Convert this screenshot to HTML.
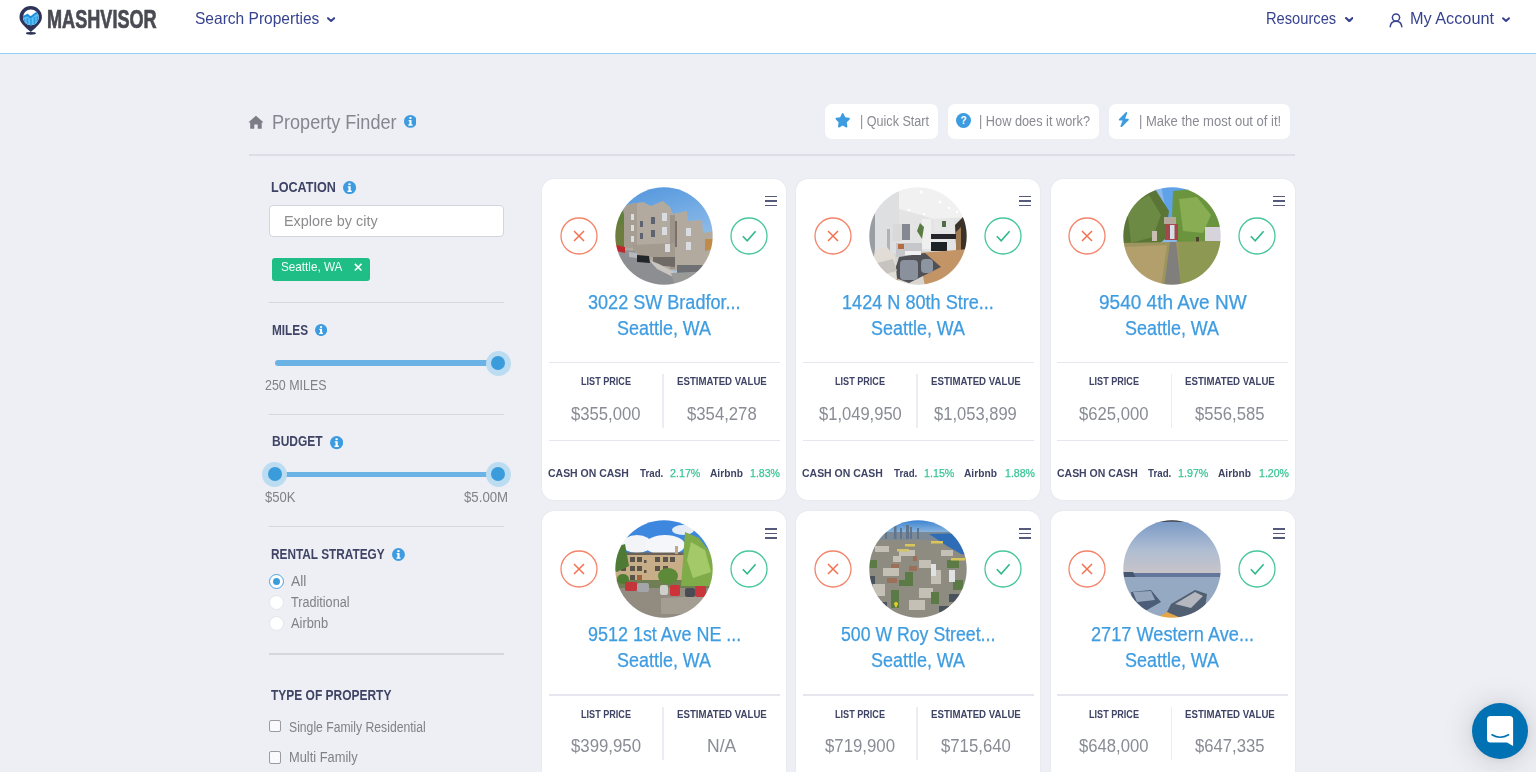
<!DOCTYPE html>
<html><head><meta charset="utf-8"><title>Mashvisor Property Finder</title>
<style>
html,body{margin:0;padding:0;}
body{width:1536px;height:772px;overflow:hidden;position:relative;background:#eeeff4;font-family:"Liberation Sans",sans-serif;}
.t{position:absolute;white-space:nowrap;transform-origin:0 0;}
</style></head><body>
<div style="position:absolute;left:0;top:0;width:1536px;height:53px;background:#fff;border-bottom:1px solid #8fd0f5"></div>
<svg style="position:absolute;left:0;top:0" width="60" height="40" viewBox="0 0 60 40">
<path d="M30.7 6 A11.2 11.2 0 0 1 41.9 17.2 C41.9 22.5 37 26.5 30.8 32 C24.5 26.5 19.5 22.5 19.5 17.2 A11.2 11.2 0 0 1 30.7 6 Z" fill="#2f3358"/>
<ellipse cx="30.9" cy="33.3" rx="5.1" ry="1.4" fill="#2f3358"/>
<circle cx="30.9" cy="17.3" r="7.9" fill="#fff"/>
<clipPath id="lc"><circle cx="30.9" cy="17.3" r="7.9"/></clipPath>
<g clip-path="url(#lc)">
<path d="M22 17.5 L27.4 14.8 L30.5 17.6 L35.6 13.4 L40 12 L40 27 L22 27 Z" fill="#5fbdf0"/>
<path d="M24.5 19 v8 M27.5 18 v9 M31 19 v8 M34.5 17 v10 M37.5 16 v11" stroke="#2a9fe6" stroke-width="1.6"/>
<path d="M22 17.5 L27.4 14.8 L30.5 17.6 L35.6 13.4 L40 12" stroke="#1b8fdc" stroke-width="2" fill="none" stroke-linejoin="round"/>
</g>
</svg>
<div class="t" style="left:47.40px;top:6.42px;font-size:26.20px;line-height:26.20px;color:#4a4a53;font-weight:700;transform:scaleX(0.6914);-webkit-text-stroke:0.7px #4a4a53;">MASHVISOR</div>
<div class="t" style="left:195.25px;top:9.73px;font-size:16.50px;line-height:16.50px;color:#37438f;transform:scaleX(0.9416);">Search Properties</div>
<svg style="position:absolute;left:327.2px;top:17.0px" width="8.2" height="5.4" viewBox="0 0 8 5"><path d="M1 1 L4 3.8 L7 1" stroke="#37438f" stroke-width="2" fill="none" stroke-linecap="round" stroke-linejoin="round"/></svg>
<div class="t" style="left:1265.80px;top:9.73px;font-size:16.50px;line-height:16.50px;color:#37438f;transform:scaleX(0.8901);">Resources</div>
<svg style="position:absolute;left:1344.5px;top:17.0px" width="8.6" height="5.4" viewBox="0 0 8 5"><path d="M1 1 L4 3.8 L7 1" stroke="#37438f" stroke-width="2" fill="none" stroke-linecap="round" stroke-linejoin="round"/></svg>
<svg style="position:absolute;left:1388px;top:12px" width="16" height="16" viewBox="0 0 16 16"><circle cx="8" cy="5.5" r="3.6" stroke="#37438f" stroke-width="1.5" fill="none"/><path d="M2.2 14.8 C2.6 10.8 5 9.2 8 9.2 C11 9.2 13.4 10.8 13.8 14.8" stroke="#37438f" stroke-width="1.5" fill="none" stroke-linecap="round"/></svg>
<div class="t" style="left:1409.60px;top:9.73px;font-size:16.50px;line-height:16.50px;color:#37438f;transform:scaleX(0.9849);">My Account</div>
<svg style="position:absolute;left:1501.5px;top:17.0px" width="8.0" height="5.4" viewBox="0 0 8 5"><path d="M1 1 L4 3.8 L7 1" stroke="#37438f" stroke-width="2" fill="none" stroke-linecap="round" stroke-linejoin="round"/></svg>
<svg style="position:absolute;left:248px;top:115px" width="16" height="15" viewBox="0 0 16 15"><path d="M7.95 0.75 L15.1 7.1 Q15.4 7.6 14.8 7.6 L13.7 7.6 L13.7 13.3 Q13.7 13.8 13.2 13.8 L9.7 13.8 L9.7 9.6 L6.3 9.6 L6.3 13.8 L2.7 13.8 Q2.2 13.8 2.2 13.3 L2.2 7.6 L1.1 7.6 Q0.5 7.6 0.8 7.1 Z" fill="#7a7c87"/></svg>
<div class="t" style="left:271.50px;top:113.19px;font-size:19.50px;line-height:19.50px;color:#858690;transform:scaleX(0.9264);">Property Finder</div>
<svg style="position:absolute;left:403.5px;top:115.0px" width="12.8" height="12.8" viewBox="0 0 14 14"><circle cx="7" cy="7" r="7" fill="#3d9be0"/><ellipse cx="7" cy="3.4" rx="1.4" ry="1.1" fill="#fff"/><path d="M5.1 5.5 H8.2 V10.2 H9.3 V11.7 H4.8 V10.2 H5.9 V6.9 H5.1 Z" fill="#fff"/></svg>
<div style="position:absolute;left:825.0px;top:104.4px;width:113.3px;height:34.7px;background:#fff;border-radius:7px"></div>
<div style="position:absolute;left:947.8px;top:104.4px;width:151.7px;height:34.7px;background:#fff;border-radius:7px"></div>
<div style="position:absolute;left:1108.8px;top:104.4px;width:180.8px;height:34.7px;background:#fff;border-radius:7px"></div>
<svg style="position:absolute;left:835.3px;top:113px" width="15.4" height="14.5" viewBox="0 0 576 512" preserveAspectRatio="none"><path d="M259.3 17.8L194 150.2 47.9 171.5c-26.2 3.8-36.7 36.1-17.7 54.6l105.7 103-25 145.5c-4.5 26.3 23.2 46 46.4 33.7L288 439.6l130.7 68.7c23.2 12.2 50.9-7.4 46.4-33.7l-25-145.5 105.7-103c19-18.5 8.5-50.8-17.7-54.6L382 150.2 316.7 17.8c-11.7-23.6-45.6-23.9-57.4 0z" fill="#3d9be0"/></svg>
<div class="t" style="left:859.50px;top:115.02px;font-size:13.80px;line-height:13.80px;color:#8a8b93;transform:scaleX(0.9119);">| Quick Start</div>
<svg style="position:absolute;left:956.3px;top:112.5px" width="15" height="15" viewBox="0 0 15 15"><circle cx="7.5" cy="7.5" r="7.5" fill="#3d9be0"/><text x="7.5" y="11.2" text-anchor="middle" font-family="Liberation Sans" font-weight="700" font-size="10" fill="#fff">?</text></svg>
<div class="t" style="left:979.00px;top:115.02px;font-size:13.80px;line-height:13.80px;color:#8a8b93;transform:scaleX(0.9237);">| How does it work?</div>
<svg style="position:absolute;left:1118.3px;top:112.2px" width="11.7" height="15.2" viewBox="0 0 448 512" preserveAspectRatio="none"><path d="M349.4 44.6c5.9-13.7 1.5-29.7-10.6-38.5s-28.6-8-39.9 1.8l-256 224c-10 8.8-13.6 22.9-8.9 35.3S50.7 288 64 288H175.5L98.6 467.4c-5.9 13.7-1.5 29.7 10.6 38.5s28.6 8 39.9-1.8l256-224c10-8.8 13.6-22.9 8.9-35.3s-16.6-20.7-30-20.7H272.5L349.4 44.6z" fill="#3d9be0"/></svg>
<div class="t" style="left:1138.60px;top:115.02px;font-size:13.80px;line-height:13.80px;color:#8a8b93;transform:scaleX(0.9427);">| Make the most out of it!</div>
<div style="position:absolute;left:248.7px;top:154.3px;width:1046.3px;height:2px;background:#dcdde7"></div>
<div class="t" style="left:271.20px;top:181.22px;font-size:13.80px;line-height:13.80px;color:#3f4465;font-weight:700;transform:scaleX(0.9137);">LOCATION</div>
<svg style="position:absolute;left:343.0px;top:181.2px" width="13.1" height="13.1" viewBox="0 0 14 14"><circle cx="7" cy="7" r="7" fill="#3d9be0"/><ellipse cx="7" cy="3.4" rx="1.4" ry="1.1" fill="#fff"/><path d="M5.1 5.5 H8.2 V10.2 H9.3 V11.7 H4.8 V10.2 H5.9 V6.9 H5.1 Z" fill="#fff"/></svg>
<div style="position:absolute;left:269.2px;top:204.5px;width:234.8px;height:32.4px;box-sizing:border-box;background:#fff;border:1px solid #d3d4dd;border-radius:4px"></div>
<div class="t" style="left:284.30px;top:213.79px;font-size:14.30px;line-height:14.30px;color:#8c8c8f;transform:scaleX(1.0078);">Explore by city</div>
<div style="position:absolute;left:271.5px;top:257.9px;width:98px;height:22.8px;background:#1ebe86;border-radius:3px"></div>
<div class="t" style="left:280.90px;top:261.37px;font-size:12.20px;line-height:12.20px;color:#f2fff9;transform:scaleX(0.9599);">Seattle, WA</div>
<svg style="position:absolute;left:353.7px;top:262.6px" width="8.3" height="8.3" viewBox="0 0 8 8"><path d="M0.8 0.8 L7.2 7.2 M7.2 0.8 L0.8 7.2" stroke="#fff" stroke-width="1.5"/></svg>
<div style="position:absolute;left:269px;top:301.8px;width:235px;height:1.5px;background:#d5d6dc"></div>
<div class="t" style="left:271.50px;top:324.02px;font-size:13.80px;line-height:13.80px;color:#3f4465;font-weight:700;transform:scaleX(0.8560);">MILES</div>
<svg style="position:absolute;left:315.0px;top:324.4px" width="12.1" height="12.1" viewBox="0 0 14 14"><circle cx="7" cy="7" r="7" fill="#3d9be0"/><ellipse cx="7" cy="3.4" rx="1.4" ry="1.1" fill="#fff"/><path d="M5.1 5.5 H8.2 V10.2 H9.3 V11.7 H4.8 V10.2 H5.9 V6.9 H5.1 Z" fill="#fff"/></svg>
<div style="position:absolute;left:274.6px;top:360.2px;width:223.4px;height:5.5px;background:#6ab3e4;border-radius:3px"></div>
<div style="position:absolute;left:485.5px;top:350.5px;width:25px;height:25px;border-radius:50%;background:#bcdcf1"></div>
<div style="position:absolute;left:490.8px;top:355.8px;width:14.4px;height:14.4px;border-radius:50%;background:#3b9cdc"></div>
<div class="t" style="left:265.00px;top:379.02px;font-size:13.80px;line-height:13.80px;color:#808189;transform:scaleX(0.9009);">250 MILES</div>
<div style="position:absolute;left:269px;top:413.9px;width:235px;height:1.5px;background:#d5d6dc"></div>
<div class="t" style="left:271.50px;top:435.42px;font-size:13.80px;line-height:13.80px;color:#3f4465;font-weight:700;transform:scaleX(0.8702);">BUDGET</div>
<svg style="position:absolute;left:329.6px;top:436.4px" width="13.2" height="13.2" viewBox="0 0 14 14"><circle cx="7" cy="7" r="7" fill="#3d9be0"/><ellipse cx="7" cy="3.4" rx="1.4" ry="1.1" fill="#fff"/><path d="M5.1 5.5 H8.2 V10.2 H9.3 V11.7 H4.8 V10.2 H5.9 V6.9 H5.1 Z" fill="#fff"/></svg>
<div style="position:absolute;left:274.6px;top:471.6px;width:223.4px;height:5.5px;background:#6ab3e4;border-radius:3px"></div>
<div style="position:absolute;left:262.4px;top:461.8px;width:25px;height:25px;border-radius:50%;background:#bcdcf1"></div>
<div style="position:absolute;left:267.7px;top:467.1px;width:14.4px;height:14.4px;border-radius:50%;background:#3b9cdc"></div>
<div style="position:absolute;left:485.5px;top:461.8px;width:25px;height:25px;border-radius:50%;background:#bcdcf1"></div>
<div style="position:absolute;left:490.8px;top:467.1px;width:14.4px;height:14.4px;border-radius:50%;background:#3b9cdc"></div>
<div class="t" style="left:265.00px;top:491.32px;font-size:13.80px;line-height:13.80px;color:#808189;transform:scaleX(0.9465);">$50K</div>
<div class="t" style="left:464.00px;top:491.32px;font-size:13.80px;line-height:13.80px;color:#808189;transform:scaleX(0.9582);">$5.00M</div>
<div style="position:absolute;left:269px;top:525.5px;width:235px;height:1.5px;background:#d5d6dc"></div>
<div class="t" style="left:271.40px;top:548.02px;font-size:13.80px;line-height:13.80px;color:#3f4465;font-weight:700;transform:scaleX(0.8573);">RENTAL STRATEGY</div>
<svg style="position:absolute;left:392.4px;top:548.0px" width="12.9" height="12.9" viewBox="0 0 14 14"><circle cx="7" cy="7" r="7" fill="#3d9be0"/><ellipse cx="7" cy="3.4" rx="1.4" ry="1.1" fill="#fff"/><path d="M5.1 5.5 H8.2 V10.2 H9.3 V11.7 H4.8 V10.2 H5.9 V6.9 H5.1 Z" fill="#fff"/></svg>
<div style="position:absolute;left:269.2px;top:573.6px;width:15px;height:15px;box-sizing:border-box;border-radius:50%;background:#fff;border:1.5px solid #4aa3e2"></div>
<div style="position:absolute;left:273.2px;top:577.6px;width:7px;height:7px;border-radius:50%;background:#3b9cdc"></div>
<div style="position:absolute;left:269.2px;top:595.0px;width:15px;height:15px;box-sizing:border-box;border-radius:50%;background:#fff;border:1px solid #e4e5ea"></div>
<div style="position:absolute;left:269.2px;top:615.9px;width:15px;height:15px;box-sizing:border-box;border-radius:50%;background:#fff;border:1px solid #e4e5ea"></div>
<div class="t" style="left:291.40px;top:574.62px;font-size:13.80px;line-height:13.80px;color:#808189;transform:scaleX(1.0005);">All</div>
<div class="t" style="left:291.40px;top:596.02px;font-size:13.80px;line-height:13.80px;color:#808189;transform:scaleX(0.9152);">Traditional</div>
<div class="t" style="left:291.40px;top:617.22px;font-size:13.80px;line-height:13.80px;color:#808189;transform:scaleX(0.9299);">Airbnb</div>
<div style="position:absolute;left:269px;top:653.0px;width:235px;height:1.5px;background:#d5d6dc"></div>
<div class="t" style="left:271.20px;top:688.92px;font-size:13.80px;line-height:13.80px;color:#3f4465;font-weight:700;transform:scaleX(0.8675);">TYPE OF PROPERTY</div>
<div style="position:absolute;left:269px;top:719.8px;width:12.2px;height:12.2px;box-sizing:border-box;border:1.3px solid #9a9ba3;border-radius:2px;background:#fafafc"></div>
<div style="position:absolute;left:269px;top:751.4px;width:12.2px;height:12.2px;box-sizing:border-box;border:1.3px solid #9a9ba3;border-radius:2px;background:#fafafc"></div>
<div class="t" style="left:288.60px;top:720.82px;font-size:13.80px;line-height:13.80px;color:#808189;transform:scaleX(0.8830);">Single Family Residential</div>
<div class="t" style="left:288.60px;top:751.22px;font-size:13.80px;line-height:13.80px;color:#808189;transform:scaleX(0.9319);">Multi Family</div>
<div style="position:absolute;left:542.3px;top:178.5px;width:244px;height:321.8px;background:#fff;border-radius:12px;box-shadow:0 0 1.5px rgba(40,40,80,0.10)"></div>
<svg style="position:absolute;left:560.2px;top:217.2px" width="38" height="38" viewBox="0 0 38 38"><circle cx="19" cy="19" r="18" stroke="#f4846a" stroke-width="1.3" fill="none"/><path d="M14 14 L24 24 M24 14 L14 24" stroke="#f2714f" stroke-width="1.5"/></svg>
<svg style="position:absolute;left:729.7px;top:217.2px" width="38" height="38" viewBox="0 0 38 38"><circle cx="19" cy="19" r="18" stroke="#47c79a" stroke-width="1.3" fill="none"/><path d="M12.8 19.2 L17.2 23.8 L25.6 14.2" stroke="#2fba88" stroke-width="1.6" fill="none"/></svg>
<div style="position:absolute;left:765.0px;top:195.7px;width:12.2px;height:1.6px;background:#555a7a"></div>
<div style="position:absolute;left:765.0px;top:200.2px;width:12.2px;height:1.6px;background:#555a7a"></div>
<div style="position:absolute;left:765.0px;top:204.7px;width:12.2px;height:1.6px;background:#555a7a"></div>
<svg style="position:absolute;left:615.0px;top:187.0px" width="98" height="98" viewBox="0 0 98 98"><defs><clipPath id="ic0"><circle cx="49" cy="49" r="48.7"/></clipPath><filter id="bl0" x="-5%" y="-5%" width="110%" height="110%"><feGaussianBlur stdDeviation="0.7"/></filter></defs><g clip-path="url(#ic0)"><g filter="url(#bl0)">
<defs><linearGradient id="s1" x1="0" y1="0" x2="0.3" y2="1"><stop offset="0" stop-color="#4d93dc"/><stop offset="1" stop-color="#a9cdee"/></linearGradient></defs>
<rect x="-2" y="-2" width="102" height="102" fill="url(#s1)"/>
<path d="M-2 24 L8 24 L12 40 L12 66 L-2 66 Z" fill="#5f7f3a"/>
<path d="M0 40 L8 36 L10 58 L0 60 Z" fill="#6d7d3c"/>
<path d="M9 20 L15 17 L28 15 L36 19 L48 14 L55 20 L58 27 L72 24 L73 34 L87 33 L88 46 L92 50 L92 86 L9 80 Z" fill="#b3aa9f"/>
<path d="M9 20 L15 17 L22 16 L22 60 L9 62 Z" fill="#a69d93"/>
<path d="M55 28 L60 28 L60 82 L55 82 Z" fill="#9c948b"/>
<path d="M18 58 L60 56 L60 70 L18 70 Z" fill="#a39a90"/>
<path d="M38 70 L60 70 L60 80 L38 78 Z" fill="#6f6b66"/>
<g fill="#d9dde2"><rect x="16" y="27" width="3" height="6"/><rect x="16" y="38" width="3" height="6"/><rect x="16" y="49" width="3" height="6"/><rect x="47" y="26" width="5" height="8"/><rect x="47" y="40" width="5" height="8"/><rect x="50" y="57" width="5" height="8"/><rect x="71" y="41" width="5" height="8"/><rect x="71" y="55" width="5" height="8"/></g>
<g fill="#5d6470"><rect x="25" y="34" width="3" height="6"/><rect x="25" y="46" width="3" height="6"/><rect x="36" y="30" width="4" height="7"/><rect x="36" y="43" width="4" height="7"/></g>
<path d="M60 34 L62 34 L62 60 L60 60 Z" fill="#7d7068"/>
<path d="M62 78 L88 78 L88 86 L62 86 Z" fill="#6e7073"/>
<path d="M-2 62 L20 68 L45 78 L70 92 L72 100 L-2 100 Z" fill="#8d8e92"/>
<path d="M34 73 L44 77 L68 90 L66 94 L42 82 Z" fill="#c9c6c0"/>
<path d="M1 58 L10 60 L10 66 L1 64 Z" fill="#c0282d"/>
<path d="M10 63 L20 64 L20 70 L10 69 Z" fill="#8e9196"/>
<path d="M14 65 L22 66 L22 71 L14 70 Z" fill="#b5b8bc"/>
<path d="M22 68 L34 69 L35 76 L22 75 Z" fill="#24262b"/>
<path d="M88 46 L98 44 L98 86 L88 86 Z" fill="#b3aa9f"/><path d="M90 52 L98 52 L98 62 L90 64 Z" fill="#c08a4a"/><path d="M56 86 L100 84 L100 100 L60 100 Z" fill="#9a9a98"/>
</g></g></svg>
<div class="t" style="left:588.00px;top:292.59px;font-size:19.50px;line-height:19.50px;color:#3e9ce0;transform:scaleX(0.9262);-webkit-text-stroke:0.25px #3e9ce0;">3022 SW Bradfor...</div>
<div class="t" style="left:617.25px;top:318.79px;font-size:19.50px;line-height:19.50px;color:#3e9ce0;transform:scaleX(0.9204);-webkit-text-stroke:0.25px #3e9ce0;">Seattle, WA</div>
<div style="position:absolute;left:548.7px;top:361.9px;width:231px;height:1.5px;background:#e6e7ee"></div>
<div style="position:absolute;left:662.3px;top:374.4px;width:1.5px;height:53.5px;background:#ecedf2"></div>
<div style="position:absolute;left:548.7px;top:439.6px;width:231px;height:1.5px;background:#e6e7ee"></div>
<div class="t" style="left:580.90px;top:377.23px;font-size:10.00px;line-height:10.00px;color:#3f4466;font-weight:700;transform:scaleX(0.9089);">LIST PRICE</div>
<div class="t" style="left:676.80px;top:377.23px;font-size:10.00px;line-height:10.00px;color:#3f4466;font-weight:700;transform:scaleX(0.9660);">ESTIMATED VALUE</div>
<div class="t" style="left:571.10px;top:405.68px;font-size:17.50px;line-height:17.50px;color:#8a8c95;transform:scaleX(0.9535);">$355,000</div>
<div class="t" style="left:686.85px;top:405.68px;font-size:17.50px;line-height:17.50px;color:#8a8c95;transform:scaleX(0.9549);">$354,278</div>
<div class="t" style="left:548.30px;top:467.56px;font-size:11.50px;line-height:11.50px;color:#3f4466;font-weight:700;transform:scaleX(0.9109);">CASH ON CASH</div>
<div class="t" style="left:639.60px;top:467.56px;font-size:11.50px;line-height:11.50px;color:#3f4466;font-weight:700;transform:scaleX(0.8477);">Trad.</div>
<div class="t" style="left:670.00px;top:467.56px;font-size:11.50px;line-height:11.50px;color:#38c594;transform:scaleX(0.9324);-webkit-text-stroke:0.25px #38c594;">2.17%</div>
<div class="t" style="left:710.00px;top:467.56px;font-size:11.50px;line-height:11.50px;color:#3f4466;font-weight:700;transform:scaleX(0.8879);">Airbnb</div>
<div class="t" style="left:750.40px;top:467.56px;font-size:11.50px;line-height:11.50px;color:#38c594;transform:scaleX(0.9202);-webkit-text-stroke:0.25px #38c594;">1.83%</div>
<div style="position:absolute;left:796.4px;top:178.5px;width:244px;height:321.8px;background:#fff;border-radius:12px;box-shadow:0 0 1.5px rgba(40,40,80,0.10)"></div>
<svg style="position:absolute;left:814.3px;top:217.2px" width="38" height="38" viewBox="0 0 38 38"><circle cx="19" cy="19" r="18" stroke="#f4846a" stroke-width="1.3" fill="none"/><path d="M14 14 L24 24 M24 14 L14 24" stroke="#f2714f" stroke-width="1.5"/></svg>
<svg style="position:absolute;left:983.8px;top:217.2px" width="38" height="38" viewBox="0 0 38 38"><circle cx="19" cy="19" r="18" stroke="#47c79a" stroke-width="1.3" fill="none"/><path d="M12.8 19.2 L17.2 23.8 L25.6 14.2" stroke="#2fba88" stroke-width="1.6" fill="none"/></svg>
<div style="position:absolute;left:1019.1px;top:195.7px;width:12.2px;height:1.6px;background:#555a7a"></div>
<div style="position:absolute;left:1019.1px;top:200.2px;width:12.2px;height:1.6px;background:#555a7a"></div>
<div style="position:absolute;left:1019.1px;top:204.7px;width:12.2px;height:1.6px;background:#555a7a"></div>
<svg style="position:absolute;left:869.1px;top:187.0px" width="98" height="98" viewBox="0 0 98 98"><defs><clipPath id="ic1"><circle cx="49" cy="49" r="48.7"/></clipPath><filter id="bl1" x="-5%" y="-5%" width="110%" height="110%"><feGaussianBlur stdDeviation="0.7"/></filter></defs><g clip-path="url(#ic1)"><g filter="url(#bl1)">
<rect x="-2" y="-2" width="102" height="102" fill="#e4e4e5"/>
<path d="M30 -2 L100 -2 L100 30 L64 32 L52 28 L30 22 Z" fill="#f1f1f2"/>
<path d="M-2 -2 L30 -2 L30 70 L-2 70 Z" fill="#dedfe1"/>
<path d="M0 20 L6 18 L6 70 L0 72 Z" fill="#9a9da3"/>
<circle cx="52" cy="5" r="1.5" fill="#fff"/><circle cx="71" cy="15" r="1.4" fill="#fff"/><circle cx="40" cy="23" r="1.3" fill="#fff"/><circle cx="80" cy="21" r="1.3" fill="#fff"/><circle cx="55" cy="27" r="1.2" fill="#fff"/><circle cx="88" cy="25" r="1.2" fill="#fff"/>
<rect x="24" y="37" width="9" height="17" fill="#d9d9da"/><rect x="33" y="37" width="8" height="16" fill="#858890"/>
<rect x="18" y="42" width="3" height="22" fill="#b0b2b5"/>
<rect x="53" y="32" width="9" height="30" fill="#efefef"/>
<rect x="65" y="32" width="20" height="12" fill="#e6e7e6"/>
<rect x="73" y="34" width="4" height="6" fill="#4f6d45"/>
<rect x="62" y="47" width="26" height="5" fill="#25272c"/>
<rect x="62" y="54" width="16" height="16" fill="#1f2127"/>
<rect x="62" y="53" width="16" height="2" fill="#e9e9ea"/>
<rect x="79" y="53" width="8" height="13" fill="#e2e3e5"/>
<path d="M86 38 L94 30 L98 34 L98 70 L88 76 Z" fill="#3a302c"/>
<path d="M87 45 L92 40 L92 70 L87 74 Z" fill="#a07a55"/>
<path d="M48 44 l3 -8 l4 4 l-2 12 z" fill="#5a7c43"/>
<path d="M-2 72 L40 64 L100 64 L100 100 L-2 100 Z" fill="#d9d6d2"/><path d="M50 66 L100 62 L100 100 L56 100 Z" fill="#c39466"/><path d="M10 80 L28 78 L30 100 L10 100 Z" fill="#bf9262"/>
<rect x="27" y="56" width="26" height="14" fill="#c6c7cb"/>
<rect x="29" y="57" width="6" height="5" fill="#b56a3f"/>
<path d="M30 70 L56 66 L72 80 L40 96 L24 90 Z" fill="#505156"/>
<rect x="31" y="73" width="18" height="20" rx="4" fill="#8a919c"/>
<rect x="52" y="72" width="12" height="14" rx="4" fill="#8d95a1"/>
<rect x="36" y="64" width="16" height="4" fill="#f0f0f0"/>
<path d="M6 62 L18 60 L26 70 L28 92 L12 92 L4 76 Z" fill="#e1ddd6"/>
<path d="M8 76 L24 72 L28 84 L12 88 Z" fill="#c7c4c0"/>
</g></g></svg>
<div class="t" style="left:842.45px;top:292.59px;font-size:19.50px;line-height:19.50px;color:#3e9ce0;transform:scaleX(0.9280);-webkit-text-stroke:0.25px #3e9ce0;">1424 N 80th Stre...</div>
<div class="t" style="left:871.35px;top:318.79px;font-size:19.50px;line-height:19.50px;color:#3e9ce0;transform:scaleX(0.9204);-webkit-text-stroke:0.25px #3e9ce0;">Seattle, WA</div>
<div style="position:absolute;left:802.8px;top:361.9px;width:231px;height:1.5px;background:#e6e7ee"></div>
<div style="position:absolute;left:916.4px;top:374.4px;width:1.5px;height:53.5px;background:#ecedf2"></div>
<div style="position:absolute;left:802.8px;top:439.6px;width:231px;height:1.5px;background:#e6e7ee"></div>
<div class="t" style="left:835.00px;top:377.23px;font-size:10.00px;line-height:10.00px;color:#3f4466;font-weight:700;transform:scaleX(0.9089);">LIST PRICE</div>
<div class="t" style="left:930.90px;top:377.23px;font-size:10.00px;line-height:10.00px;color:#3f4466;font-weight:700;transform:scaleX(0.9660);">ESTIMATED VALUE</div>
<div class="t" style="left:818.60px;top:405.68px;font-size:17.50px;line-height:17.50px;color:#8a8c95;transform:scaleX(0.9453);">$1,049,950</div>
<div class="t" style="left:934.40px;top:405.68px;font-size:17.50px;line-height:17.50px;color:#8a8c95;transform:scaleX(0.9453);">$1,053,899</div>
<div class="t" style="left:802.40px;top:467.56px;font-size:11.50px;line-height:11.50px;color:#3f4466;font-weight:700;transform:scaleX(0.9109);">CASH ON CASH</div>
<div class="t" style="left:893.70px;top:467.56px;font-size:11.50px;line-height:11.50px;color:#3f4466;font-weight:700;transform:scaleX(0.8477);">Trad.</div>
<div class="t" style="left:924.10px;top:467.56px;font-size:11.50px;line-height:11.50px;color:#38c594;transform:scaleX(0.9324);-webkit-text-stroke:0.25px #38c594;">1.15%</div>
<div class="t" style="left:964.10px;top:467.56px;font-size:11.50px;line-height:11.50px;color:#3f4466;font-weight:700;transform:scaleX(0.8879);">Airbnb</div>
<div class="t" style="left:1004.50px;top:467.56px;font-size:11.50px;line-height:11.50px;color:#38c594;transform:scaleX(0.9202);-webkit-text-stroke:0.25px #38c594;">1.88%</div>
<div style="position:absolute;left:1050.5px;top:178.5px;width:244px;height:321.8px;background:#fff;border-radius:12px;box-shadow:0 0 1.5px rgba(40,40,80,0.10)"></div>
<svg style="position:absolute;left:1068.4px;top:217.2px" width="38" height="38" viewBox="0 0 38 38"><circle cx="19" cy="19" r="18" stroke="#f4846a" stroke-width="1.3" fill="none"/><path d="M14 14 L24 24 M24 14 L14 24" stroke="#f2714f" stroke-width="1.5"/></svg>
<svg style="position:absolute;left:1237.9px;top:217.2px" width="38" height="38" viewBox="0 0 38 38"><circle cx="19" cy="19" r="18" stroke="#47c79a" stroke-width="1.3" fill="none"/><path d="M12.8 19.2 L17.2 23.8 L25.6 14.2" stroke="#2fba88" stroke-width="1.6" fill="none"/></svg>
<div style="position:absolute;left:1273.2px;top:195.7px;width:12.2px;height:1.6px;background:#555a7a"></div>
<div style="position:absolute;left:1273.2px;top:200.2px;width:12.2px;height:1.6px;background:#555a7a"></div>
<div style="position:absolute;left:1273.2px;top:204.7px;width:12.2px;height:1.6px;background:#555a7a"></div>
<svg style="position:absolute;left:1123.2px;top:187.0px" width="98" height="98" viewBox="0 0 98 98"><defs><clipPath id="ic2"><circle cx="49" cy="49" r="48.7"/></clipPath><filter id="bl2" x="-5%" y="-5%" width="110%" height="110%"><feGaussianBlur stdDeviation="0.7"/></filter></defs><g clip-path="url(#ic2)"><g filter="url(#bl2)">
<rect x="-2" y="-2" width="102" height="102" fill="#8bb8ea"/>
<path d="M38 -2 H64 L56 30 H44 Z" fill="#5ea2e8"/>
<path d="M-2 8 L32 2 L46 24 L42 52 L28 64 L-2 66 Z" fill="#5a7434"/>
<path d="M4 20 L26 8 L38 28 L30 50 L8 56 Z" fill="#6d8a44"/>
<path d="M50 4 L70 2 L92 14 L100 38 L98 54 L74 58 L54 55 L49 30 Z" fill="#6a943e"/>
<path d="M56 12 L74 10 L88 28 L80 46 L60 44 Z" fill="#88ad52"/>
<rect x="41" y="30" width="12" height="7" fill="#b3a99d"/>
<rect x="42" y="37" width="13" height="16" fill="#a6464b"/>
<rect x="47" y="38" width="4.5" height="14" fill="#d3e2ea"/>
<rect x="82" y="40" width="18" height="14" fill="#d6d3da"/>
<rect x="29" y="44" width="5" height="10" fill="#c9bdb4"/>
<rect x="73" y="50" width="3" height="12" fill="#4b3f2a"/>
<path d="M-2 56 L100 54 L100 100 L-2 100 Z" fill="#9c955e"/>
<path d="M-2 60 L44 58 L38 100 L-2 100 Z" fill="#b29f6c"/>
<path d="M56 56 L100 54 L100 100 L58 100 Z" fill="#8d9852"/>
<path d="M47 55 L53 55 L58 100 L41 100 Z" fill="#807f7c"/>
</g></g></svg>
<div class="t" style="left:1098.70px;top:292.59px;font-size:19.50px;line-height:19.50px;color:#3e9ce0;transform:scaleX(0.9749);-webkit-text-stroke:0.25px #3e9ce0;">9540 4th Ave NW</div>
<div class="t" style="left:1125.45px;top:318.79px;font-size:19.50px;line-height:19.50px;color:#3e9ce0;transform:scaleX(0.9204);-webkit-text-stroke:0.25px #3e9ce0;">Seattle, WA</div>
<div style="position:absolute;left:1056.9px;top:361.9px;width:231px;height:1.5px;background:#e6e7ee"></div>
<div style="position:absolute;left:1170.5px;top:374.4px;width:1.5px;height:53.5px;background:#ecedf2"></div>
<div style="position:absolute;left:1056.9px;top:439.6px;width:231px;height:1.5px;background:#e6e7ee"></div>
<div class="t" style="left:1089.10px;top:377.23px;font-size:10.00px;line-height:10.00px;color:#3f4466;font-weight:700;transform:scaleX(0.9089);">LIST PRICE</div>
<div class="t" style="left:1185.00px;top:377.23px;font-size:10.00px;line-height:10.00px;color:#3f4466;font-weight:700;transform:scaleX(0.9660);">ESTIMATED VALUE</div>
<div class="t" style="left:1079.35px;top:405.68px;font-size:17.50px;line-height:17.50px;color:#8a8c95;transform:scaleX(0.9522);">$625,000</div>
<div class="t" style="left:1195.20px;top:405.68px;font-size:17.50px;line-height:17.50px;color:#8a8c95;transform:scaleX(0.9508);">$556,585</div>
<div class="t" style="left:1056.50px;top:467.56px;font-size:11.50px;line-height:11.50px;color:#3f4466;font-weight:700;transform:scaleX(0.9109);">CASH ON CASH</div>
<div class="t" style="left:1147.80px;top:467.56px;font-size:11.50px;line-height:11.50px;color:#3f4466;font-weight:700;transform:scaleX(0.8477);">Trad.</div>
<div class="t" style="left:1178.20px;top:467.56px;font-size:11.50px;line-height:11.50px;color:#38c594;transform:scaleX(0.9324);-webkit-text-stroke:0.25px #38c594;">1.97%</div>
<div class="t" style="left:1218.20px;top:467.56px;font-size:11.50px;line-height:11.50px;color:#3f4466;font-weight:700;transform:scaleX(0.8879);">Airbnb</div>
<div class="t" style="left:1258.60px;top:467.56px;font-size:11.50px;line-height:11.50px;color:#38c594;transform:scaleX(0.9202);-webkit-text-stroke:0.25px #38c594;">1.20%</div>
<div style="position:absolute;left:542.3px;top:511.0px;width:244px;height:321.8px;background:#fff;border-radius:12px;box-shadow:0 0 1.5px rgba(40,40,80,0.10)"></div>
<svg style="position:absolute;left:560.2px;top:549.7px" width="38" height="38" viewBox="0 0 38 38"><circle cx="19" cy="19" r="18" stroke="#f4846a" stroke-width="1.3" fill="none"/><path d="M14 14 L24 24 M24 14 L14 24" stroke="#f2714f" stroke-width="1.5"/></svg>
<svg style="position:absolute;left:729.7px;top:549.7px" width="38" height="38" viewBox="0 0 38 38"><circle cx="19" cy="19" r="18" stroke="#47c79a" stroke-width="1.3" fill="none"/><path d="M12.8 19.2 L17.2 23.8 L25.6 14.2" stroke="#2fba88" stroke-width="1.6" fill="none"/></svg>
<div style="position:absolute;left:765.0px;top:528.2px;width:12.2px;height:1.6px;background:#555a7a"></div>
<div style="position:absolute;left:765.0px;top:532.7px;width:12.2px;height:1.6px;background:#555a7a"></div>
<div style="position:absolute;left:765.0px;top:537.2px;width:12.2px;height:1.6px;background:#555a7a"></div>
<svg style="position:absolute;left:615.0px;top:519.5px" width="98" height="98" viewBox="0 0 98 98"><defs><clipPath id="ic3"><circle cx="49" cy="49" r="48.7"/></clipPath><filter id="bl3" x="-5%" y="-5%" width="110%" height="110%"><feGaussianBlur stdDeviation="0.7"/></filter></defs><g clip-path="url(#ic3)"><g filter="url(#bl3)">
<rect x="-2" y="-2" width="102" height="102" fill="#3c87df"/>
<ellipse cx="22" cy="24" rx="15" ry="9" fill="#f2f4f8"/>
<ellipse cx="50" cy="25" rx="20" ry="10" fill="#f4f6fa"/>
<ellipse cx="68" cy="10" rx="11" ry="5" fill="#e6ecf5"/>
<rect x="-2" y="33" width="80" height="36" fill="#c8ae88"/><rect x="-2" y="60" width="102" height="10" fill="#6f7f52"/>
<rect x="3" y="32.5" width="72" height="2.5" fill="#6c6257"/>
<rect x="60" y="26" width="3" height="8" fill="#c1a987"/>
<g fill="#5a5248"><rect x="6" y="37" width="5" height="5"/><rect x="15" y="37" width="5" height="5"/><rect x="22" y="37" width="5" height="5"/><rect x="40" y="37" width="5" height="5"/><rect x="48" y="37" width="5" height="5"/><rect x="55" y="37" width="5" height="5"/><rect x="6" y="46" width="5" height="5"/><rect x="15" y="46" width="5" height="5"/><rect x="22" y="46" width="5" height="5"/><rect x="40" y="46" width="5" height="5"/><rect x="48" y="46" width="5" height="5"/><rect x="15" y="55" width="5" height="5"/><rect x="29" y="40" width="2.5" height="3"/><rect x="29" y="50" width="2.5" height="3"/></g>
<rect x="22" y="55" width="5" height="5" fill="#a0643a"/>
<path d="M-2 28 L10 24 L14 46 L2 52 L-2 50 Z" fill="#4f7a34"/>
<path d="M70 12 L84 18 L98 36 L100 66 L66 66 L68 40 Z" fill="#7fac4a"/>
<path d="M76 22 L90 30 L96 52 L78 58 L72 40 Z" fill="#a3c967"/>
<ellipse cx="53" cy="56" rx="10" ry="8" fill="#5b8a39"/>
<ellipse cx="8" cy="59" rx="6" ry="5" fill="#4f7d32"/>
<rect x="-2" y="68" width="102" height="32" fill="#918b80"/>
<path d="M46 78 L92 76 L90 94 L46 94 Z" fill="#a49d91"/>
<rect x="10" y="62" width="12" height="9" rx="2" fill="#c3343a"/>
<rect x="22" y="63" width="12" height="9" rx="2" fill="#a3a5a8"/>
<rect x="45" y="65" width="8" height="10" rx="2" fill="#cfd0cc"/>
<rect x="55" y="65" width="10" height="11" rx="2" fill="#cc3037"/>
<rect x="70" y="68" width="10" height="9" rx="2" fill="#4a4d52"/>
<rect x="80" y="66" width="11" height="11" rx="2" fill="#c8353a"/>
</g></g></svg>
<div class="t" style="left:587.65px;top:625.09px;font-size:19.50px;line-height:19.50px;color:#3e9ce0;transform:scaleX(0.9202);-webkit-text-stroke:0.25px #3e9ce0;">9512 1st Ave NE ...</div>
<div class="t" style="left:617.25px;top:651.29px;font-size:19.50px;line-height:19.50px;color:#3e9ce0;transform:scaleX(0.9204);-webkit-text-stroke:0.25px #3e9ce0;">Seattle, WA</div>
<div style="position:absolute;left:548.7px;top:694.4px;width:231px;height:1.5px;background:#e6e7ee"></div>
<div style="position:absolute;left:662.3px;top:706.9px;width:1.5px;height:53.5px;background:#ecedf2"></div>
<div style="position:absolute;left:548.7px;top:772.0px;width:231px;height:1.5px;background:#e6e7ee"></div>
<div class="t" style="left:580.90px;top:709.73px;font-size:10.00px;line-height:10.00px;color:#3f4466;font-weight:700;transform:scaleX(0.9089);">LIST PRICE</div>
<div class="t" style="left:676.80px;top:709.73px;font-size:10.00px;line-height:10.00px;color:#3f4466;font-weight:700;transform:scaleX(0.9660);">ESTIMATED VALUE</div>
<div class="t" style="left:570.90px;top:738.18px;font-size:17.50px;line-height:17.50px;color:#8a8c95;transform:scaleX(0.9590);">$399,950</div>
<div class="t" style="left:707.10px;top:738.18px;font-size:17.50px;line-height:17.50px;color:#8a8c95;transform:scaleX(1.0009);">N/A</div>
<div style="position:absolute;left:796.4px;top:511.0px;width:244px;height:321.8px;background:#fff;border-radius:12px;box-shadow:0 0 1.5px rgba(40,40,80,0.10)"></div>
<svg style="position:absolute;left:814.3px;top:549.7px" width="38" height="38" viewBox="0 0 38 38"><circle cx="19" cy="19" r="18" stroke="#f4846a" stroke-width="1.3" fill="none"/><path d="M14 14 L24 24 M24 14 L14 24" stroke="#f2714f" stroke-width="1.5"/></svg>
<svg style="position:absolute;left:983.8px;top:549.7px" width="38" height="38" viewBox="0 0 38 38"><circle cx="19" cy="19" r="18" stroke="#47c79a" stroke-width="1.3" fill="none"/><path d="M12.8 19.2 L17.2 23.8 L25.6 14.2" stroke="#2fba88" stroke-width="1.6" fill="none"/></svg>
<div style="position:absolute;left:1019.1px;top:528.2px;width:12.2px;height:1.6px;background:#555a7a"></div>
<div style="position:absolute;left:1019.1px;top:532.7px;width:12.2px;height:1.6px;background:#555a7a"></div>
<div style="position:absolute;left:1019.1px;top:537.2px;width:12.2px;height:1.6px;background:#555a7a"></div>
<svg style="position:absolute;left:869.1px;top:519.5px" width="98" height="98" viewBox="0 0 98 98"><defs><clipPath id="ic4"><circle cx="49" cy="49" r="48.7"/></clipPath><filter id="bl4" x="-5%" y="-5%" width="110%" height="110%"><feGaussianBlur stdDeviation="0.7"/></filter></defs><g clip-path="url(#ic4)"><g filter="url(#bl4)">
<defs><linearGradient id="s5" x1="0" y1="0" x2="0" y2="1"><stop offset="0" stop-color="#2f7bd0"/><stop offset="1" stop-color="#93bde0"/></linearGradient></defs>
<rect x="-2" y="-2" width="102" height="102" fill="#8e8b81"/>
<rect x="-2" y="-2" width="102" height="16" fill="url(#s5)"/>
<rect x="-2" y="12" width="102" height="8" fill="#7b8a98"/>
<g fill="#60758c"><rect x="16" y="9" width="2" height="10"/><rect x="25" y="6" width="2.5" height="13"/><rect x="31" y="8" width="2" height="11"/><rect x="37" y="5" width="3" height="14"/><rect x="41" y="7" width="2" height="12"/><rect x="48" y="8" width="2" height="11"/></g>
<path d="M60 14 L100 13 L100 36 L92 34 L78 26 Z" fill="#2f6db5"/>
<g fill="#c4c0b6"><rect x="6" y="26" width="14" height="6"/><rect x="30" y="30" width="16" height="6"/><rect x="50" y="40" width="12" height="8"/><rect x="14" y="48" width="16" height="8"/><rect x="62" y="50" width="10" height="14"/><rect x="50" y="68" width="14" height="10"/><rect x="4" y="64" width="12" height="12"/><rect x="40" y="80" width="16" height="10"/><rect x="72" y="30" width="12" height="6"/><rect x="24" y="36" width="8" height="6"/></g>
<g fill="#5c7a44"><rect x="0" y="40" width="8" height="8"/><rect x="36" y="52" width="8" height="8"/><rect x="78" y="40" width="12" height="8"/><rect x="22" y="70" width="8" height="18"/><rect x="62" y="72" width="8" height="12"/><rect x="84" y="60" width="10" height="10"/><rect x="30" y="60" width="14" height="6"/></g>
<g fill="#9c6f58"><rect x="22" y="44" width="8" height="4"/><rect x="44" y="36" width="4" height="5"/><rect x="18" y="58" width="10" height="5"/><rect x="40" y="46" width="8" height="5"/></g>
<g fill="#e0e1e3"><rect x="62" y="44" width="5" height="12"/><rect x="80" y="50" width="6" height="12"/></g>
<g fill="#4a525c"><rect x="0" y="56" width="6" height="8"/><rect x="80" y="74" width="14" height="8"/><rect x="8" y="82" width="10" height="6"/><rect x="70" y="86" width="10" height="6"/></g>
<rect x="36" y="24" width="10" height="2.5" fill="#d9c65a"/><rect x="62" y="21" width="12" height="2.5" fill="#d9c65a"/><rect x="28" y="29" width="12" height="2.5" fill="#d3c36a"/><rect x="82" y="38" width="14" height="2.5" fill="#d9c65a"/>
<path d="M25 84 a2 2 0 1 1 4 0 l-2 4 z" fill="#e5d02a"/>
</g></g></svg>
<div class="t" style="left:841.25px;top:625.09px;font-size:19.50px;line-height:19.50px;color:#3e9ce0;transform:scaleX(0.9068);-webkit-text-stroke:0.25px #3e9ce0;">500 W Roy Street...</div>
<div class="t" style="left:871.35px;top:651.29px;font-size:19.50px;line-height:19.50px;color:#3e9ce0;transform:scaleX(0.9204);-webkit-text-stroke:0.25px #3e9ce0;">Seattle, WA</div>
<div style="position:absolute;left:802.8px;top:694.4px;width:231px;height:1.5px;background:#e6e7ee"></div>
<div style="position:absolute;left:916.4px;top:706.9px;width:1.5px;height:53.5px;background:#ecedf2"></div>
<div style="position:absolute;left:802.8px;top:772.0px;width:231px;height:1.5px;background:#e6e7ee"></div>
<div class="t" style="left:835.00px;top:709.73px;font-size:10.00px;line-height:10.00px;color:#3f4466;font-weight:700;transform:scaleX(0.9089);">LIST PRICE</div>
<div class="t" style="left:930.90px;top:709.73px;font-size:10.00px;line-height:10.00px;color:#3f4466;font-weight:700;transform:scaleX(0.9660);">ESTIMATED VALUE</div>
<div class="t" style="left:825.00px;top:738.18px;font-size:17.50px;line-height:17.50px;color:#8a8c95;transform:scaleX(0.9590);">$719,900</div>
<div class="t" style="left:940.90px;top:738.18px;font-size:17.50px;line-height:17.50px;color:#8a8c95;transform:scaleX(0.9563);">$715,640</div>
<div style="position:absolute;left:1050.5px;top:511.0px;width:244px;height:321.8px;background:#fff;border-radius:12px;box-shadow:0 0 1.5px rgba(40,40,80,0.10)"></div>
<svg style="position:absolute;left:1068.4px;top:549.7px" width="38" height="38" viewBox="0 0 38 38"><circle cx="19" cy="19" r="18" stroke="#f4846a" stroke-width="1.3" fill="none"/><path d="M14 14 L24 24 M24 14 L14 24" stroke="#f2714f" stroke-width="1.5"/></svg>
<svg style="position:absolute;left:1237.9px;top:549.7px" width="38" height="38" viewBox="0 0 38 38"><circle cx="19" cy="19" r="18" stroke="#47c79a" stroke-width="1.3" fill="none"/><path d="M12.8 19.2 L17.2 23.8 L25.6 14.2" stroke="#2fba88" stroke-width="1.6" fill="none"/></svg>
<div style="position:absolute;left:1273.2px;top:528.2px;width:12.2px;height:1.6px;background:#555a7a"></div>
<div style="position:absolute;left:1273.2px;top:532.7px;width:12.2px;height:1.6px;background:#555a7a"></div>
<div style="position:absolute;left:1273.2px;top:537.2px;width:12.2px;height:1.6px;background:#555a7a"></div>
<svg style="position:absolute;left:1123.2px;top:519.5px" width="98" height="98" viewBox="0 0 98 98"><defs><clipPath id="ic5"><circle cx="49" cy="49" r="48.7"/></clipPath><filter id="bl5" x="-5%" y="-5%" width="110%" height="110%"><feGaussianBlur stdDeviation="0.7"/></filter></defs><g clip-path="url(#ic5)"><g filter="url(#bl5)">
<defs><linearGradient id="s6" x1="0" y1="0" x2="0" y2="1"><stop offset="0" stop-color="#7496c4"/><stop offset="0.55" stop-color="#afbdd2"/><stop offset="1" stop-color="#cbc4c7"/></linearGradient></defs>
<rect x="-2" y="-2" width="102" height="58" fill="url(#s6)"/>
<path d="M34 -2 L64 -2 L64 2 Q49 1 34 2 Z" fill="#2a2c30"/>
<rect x="-2" y="53" width="102" height="4" fill="#62779a"/>
<path d="M-2 52 L10 52 L13 58 L-2 58 Z" fill="#46566f"/>
<rect x="-2" y="57" width="102" height="45" fill="#96a9c2"/>
<path d="M8 72 L28 70 L38 82 L24 90 L10 88 Z" fill="#4c5d78"/>
<path d="M10 72 L28 71 L32 80 L14 82 Z" fill="#95a5bc"/>
<path d="M40 100 L48 84 L72 70 L84 74 L82 88 L68 100 Z" fill="#515f72"/>
<path d="M52 84 L72 72 L80 76 L68 88 Z" fill="#b5b9bf"/>
<path d="M30 100 L44 92 L58 98 L58 100 Z" fill="#e3a545"/>
</g></g></svg>
<div class="t" style="left:1090.95px;top:625.09px;font-size:19.50px;line-height:19.50px;color:#3e9ce0;transform:scaleX(0.9326);-webkit-text-stroke:0.25px #3e9ce0;">2717 Western Ave...</div>
<div class="t" style="left:1125.45px;top:651.29px;font-size:19.50px;line-height:19.50px;color:#3e9ce0;transform:scaleX(0.9204);-webkit-text-stroke:0.25px #3e9ce0;">Seattle, WA</div>
<div style="position:absolute;left:1056.9px;top:694.4px;width:231px;height:1.5px;background:#e6e7ee"></div>
<div style="position:absolute;left:1170.5px;top:706.9px;width:1.5px;height:53.5px;background:#ecedf2"></div>
<div style="position:absolute;left:1056.9px;top:772.0px;width:231px;height:1.5px;background:#e6e7ee"></div>
<div class="t" style="left:1089.10px;top:709.73px;font-size:10.00px;line-height:10.00px;color:#3f4466;font-weight:700;transform:scaleX(0.9089);">LIST PRICE</div>
<div class="t" style="left:1185.00px;top:709.73px;font-size:10.00px;line-height:10.00px;color:#3f4466;font-weight:700;transform:scaleX(0.9660);">ESTIMATED VALUE</div>
<div class="t" style="left:1079.35px;top:738.18px;font-size:17.50px;line-height:17.50px;color:#8a8c95;transform:scaleX(0.9522);">$648,000</div>
<div class="t" style="left:1195.15px;top:738.18px;font-size:17.50px;line-height:17.50px;color:#8a8c95;transform:scaleX(0.9522);">$647,335</div>
<div style="position:absolute;left:1472.3px;top:703px;width:56px;height:56px;border-radius:50%;background:#0071b2;box-shadow:0 1px 6px rgba(0,0,0,0.06),0 2px 32px rgba(0,0,0,0.16)"></div>
<svg style="position:absolute;left:1486px;top:715px" width="28" height="32" viewBox="0 0 28 32"><path d="M4.5 1 H23.6 A3.5 3.5 0 0 1 27.1 4.5 V31 L21 27.5 H4.5 A3.5 3.5 0 0 1 1 24 V4.5 A3.5 3.5 0 0 1 4.5 1 Z" fill="#fff"/><path d="M6 19.8 Q14 24.6 22.6 19.8" stroke="#0071b2" stroke-width="1.6" fill="none" stroke-linecap="round"/></svg>
</body></html>
